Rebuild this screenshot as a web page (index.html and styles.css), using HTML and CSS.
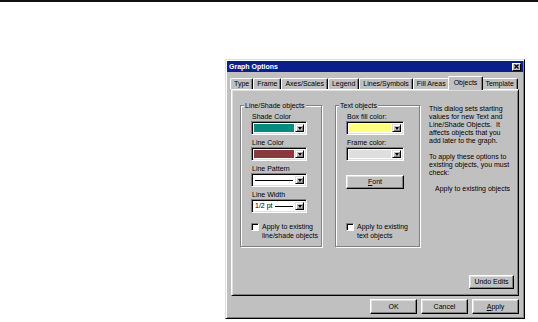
FILE: index.html
```html
<!DOCTYPE html>
<html lang="en">
<head>
  <meta charset="UTF-8">
  <meta name="viewport" content="width=device-width, initial-scale=1.0">
  <title>Graph Options</title>
  <link rel="stylesheet" href="styles.css">
</head>
<body>
  <div class="topline"></div>

  <div class="dialog">
    <div class="titlebar">
      <span class="title">Graph Options</span>
      <span class="close">
        <svg width="5" height="5" viewBox="0 0 5 5"><path d="M0.5 0.5L4.5 4.5M4.5 0.5L0.5 4.5" stroke="#000" stroke-width="1.3"/></svg>
      </span>
    </div>

    <div class="tabs">
      <div class="tab">Type</div>
      <div class="tab">Frame</div>
      <div class="tab">Axes/Scales</div>
      <div class="tab">Legend</div>
      <div class="tab">Lines/Symbols</div>
      <div class="tab">Fill Areas</div>
      <div class="tab active">Objects</div>
      <div class="tab">Template</div>
    </div>

    <div class="panel">
      <div class="group group-lines">
        <div class="legend">Line/Shade objects</div>
        <div class="field-label">Shade Color</div>
        <div class="combo">
          <div class="swatch swatch-teal"></div>
          <div class="drop"><span class="arrow"></span></div>
        </div>
        <div class="field-label">Line Color</div>
        <div class="combo">
          <div class="swatch swatch-red"></div>
          <div class="drop"><span class="arrow"></span></div>
        </div>
        <div class="field-label">Line Pattern</div>
        <div class="combo">
          <div class="swatch swatch-line"><span class="rule"></span></div>
          <div class="drop"><span class="arrow"></span></div>
        </div>
        <div class="field-label">Line Width</div>
        <div class="combo">
          <div class="swatch swatch-line"><span class="width-text">1/2 pt</span><span class="rule"></span></div>
          <div class="drop"><span class="arrow"></span></div>
        </div>
        <div class="check-row">
          <span class="checkbox"></span>
          <span>Apply to existing<br>line/shade objects</span>
        </div>
      </div>

      <div class="group group-text">
        <div class="legend">Text objects</div>
        <div class="field-label">Box fill color:</div>
        <div class="combo">
          <div class="swatch swatch-yellow"></div>
          <div class="drop"><span class="arrow"></span></div>
        </div>
        <div class="field-label">Frame color:</div>
        <div class="combo">
          <div class="swatch swatch-gray"></div>
          <div class="drop"><span class="arrow"></span></div>
        </div>
        <div class="btn btn-font"><u>F</u>ont</div>
        <div class="check-row">
          <span class="checkbox"></span>
          <span>Apply to existing<br>text objects</span>
        </div>
      </div>

      <div class="info">
        <p>This dialog sets starting<br>values for new Text and<br>Line/Shade Objects.&nbsp; It<br>affects objects that you<br>add later to the graph.</p>
        <p>To apply these options to<br>existing objects, you must<br>check:</p>
        <p class="indent">Apply to existing objects</p>
        <div class="btn btn-undo">Undo Edits</div>
      </div>
    </div>

    <div class="buttons">
      <div class="btn">OK</div>
      <div class="btn">Cancel</div>
      <div class="btn"><u>A</u>pply</div>
    </div>
  </div>
</body>
</html>
```

FILE: styles.css
```css
body {
  margin: 0;
  background: #fff;
  font-family: "Liberation Sans", Arial, sans-serif;
  font-size: 7px;
  color: #000;
}
.topline {
  height: 2px;
  background: #111;
}
.dialog {
  box-sizing: border-box;
  width: 300px;
  height: 260px;
  margin: 57px 0 0 225px;
  padding: 1px;
  background: #c0c0c0;
  border: 1px solid;
  border-color: #dfdfdf #000 #000 #dfdfdf;
  box-shadow: inset 1px 1px #fff, inset -1px -1px #808080;
  display: flex;
  flex-direction: column;
}
.titlebar {
  height: 11px;
  background: #0a1f8c;
  display: flex;
  align-items: center;
  justify-content: space-between;
  padding: 0 2px;
}
.title {
  color: #fff;
  font-weight: bold;
  line-height: 11px;
}
.close {
  box-sizing: border-box;
  width: 9px;
  height: 8px;
  background: #c0c0c0;
  border: 1px solid;
  border-color: #fff #000 #000 #fff;
  display: flex;
  align-items: center;
  justify-content: center;
}
.close svg {
  display: block;
}
.tabs {
  display: flex;
  align-items: flex-end;
  height: 13px;
  margin-top: 4px;
  padding-left: 3px;
}
.tab {
  box-sizing: border-box;
  height: 11px;
  padding: 0 3px;
  line-height: 10px;
  white-space: nowrap;
  background: #c0c0c0;
  border-top: 1px solid #fff;
  border-left: 1px solid #fff;
  border-right: 1px solid #000;
  border-radius: 2px 2px 0 0;
  box-shadow: inset -1px 0 #808080;
}
.tab.active {
  position: relative;
  z-index: 1;
  height: 14px;
  margin: 0 -2px -1px;
  padding: 1px 5px 0;
}
.panel {
  box-sizing: border-box;
  height: 207px;
  margin: 0 4px;
  padding: 15px 4px 6px 8px;
  border: 1px solid;
  border-color: #fff #000 #000 #fff;
  box-shadow: inset 1px 1px #dfdfdf, inset -1px -1px #808080;
  display: flex;
  align-items: flex-start;
}
.group {
  position: relative;
  box-sizing: border-box;
  height: 142px;
  padding: 6px 0 6px 10px;
  border: 1px solid #808080;
  box-shadow: inset 1px 1px #fff, 1px 1px #fff;
  display: flex;
  flex-direction: column;
  align-items: flex-start;
}
.group-lines {
  width: 82px;
}
.group-text {
  width: 85px;
  margin-left: 13px;
}
.legend {
  position: absolute;
  top: -5px;
  left: 3px;
  padding: 0 1px;
  line-height: 9px;
  background: #c0c0c0;
  white-space: nowrap;
}
.field-label {
  line-height: 9px;
  padding-left: 1px;
  white-space: nowrap;
}
.combo {
  box-sizing: border-box;
  width: 56px;
  height: 14px;
  margin-bottom: 3px;
  padding: 2px;
  background: #fff;
  border: 1px solid;
  border-color: #808080 #fff #fff #808080;
  box-shadow: inset 1px 1px #000, inset -1px -1px #dfdfdf;
  display: flex;
  gap: 1px;
}
.group-text .combo {
  width: 58px;
}
.swatch {
  flex: 1;
}
.swatch-teal { background: #058a82; }
.swatch-red { background: #8a3a3c; }
.swatch-yellow { background: #ffff80; }
.swatch-gray { background: #dedede; }
.swatch-line {
  display: flex;
  align-items: center;
  padding: 0 1px;
  gap: 2px;
}
.rule {
  flex: 1;
  height: 1px;
  background: #000;
}
.width-text {
  line-height: 8px;
  white-space: nowrap;
}
.drop {
  box-sizing: border-box;
  width: 9px;
  background: #c0c0c0;
  border: 1px solid;
  border-color: #dfdfdf #000 #000 #dfdfdf;
  box-shadow: inset 1px 1px #fff, inset -1px -1px #808080;
  display: flex;
  align-items: center;
  justify-content: center;
}
.arrow {
  width: 0;
  height: 0;
  border-left: 2.5px solid transparent;
  border-right: 2.5px solid transparent;
  border-top: 3px solid #000;
}
.btn {
  box-sizing: border-box;
  width: 47px;
  height: 15px;
  line-height: 13px;
  text-align: center;
  background: #c0c0c0;
  border: 1px solid;
  border-color: #fff #000 #000 #fff;
  box-shadow: inset -1px -1px #808080, inset 1px 1px #dfdfdf;
  white-space: nowrap;
}
.btn-font {
  width: 58px;
  height: 14px;
  line-height: 12px;
  margin-top: 11px;
}
.check-row {
  margin-top: auto;
  display: flex;
  align-items: flex-start;
  gap: 3px;
  line-height: 9px;
  white-space: nowrap;
}
.checkbox {
  box-sizing: border-box;
  width: 8px;
  height: 8px;
  margin-top: 1px;
  background: #fff;
  border: 1px solid;
  border-color: #808080 #fff #fff #808080;
  box-shadow: inset 1px 1px #000;
}
.info {
  align-self: stretch;
  flex: 1;
  margin-left: 9px;
  display: flex;
  flex-direction: column;
  align-items: flex-start;
  white-space: nowrap;
}
.info p {
  margin: 0 0 8px;
  line-height: 8px;
}
.info p.indent {
  padding-left: 6px;
}
.btn-undo {
  align-self: flex-end;
  width: 45px;
  height: 14px;
  line-height: 12px;
  margin-top: auto;
}
.buttons {
  display: flex;
  justify-content: flex-end;
  gap: 4px;
  margin: 3px 4px 0 0;
}
```
